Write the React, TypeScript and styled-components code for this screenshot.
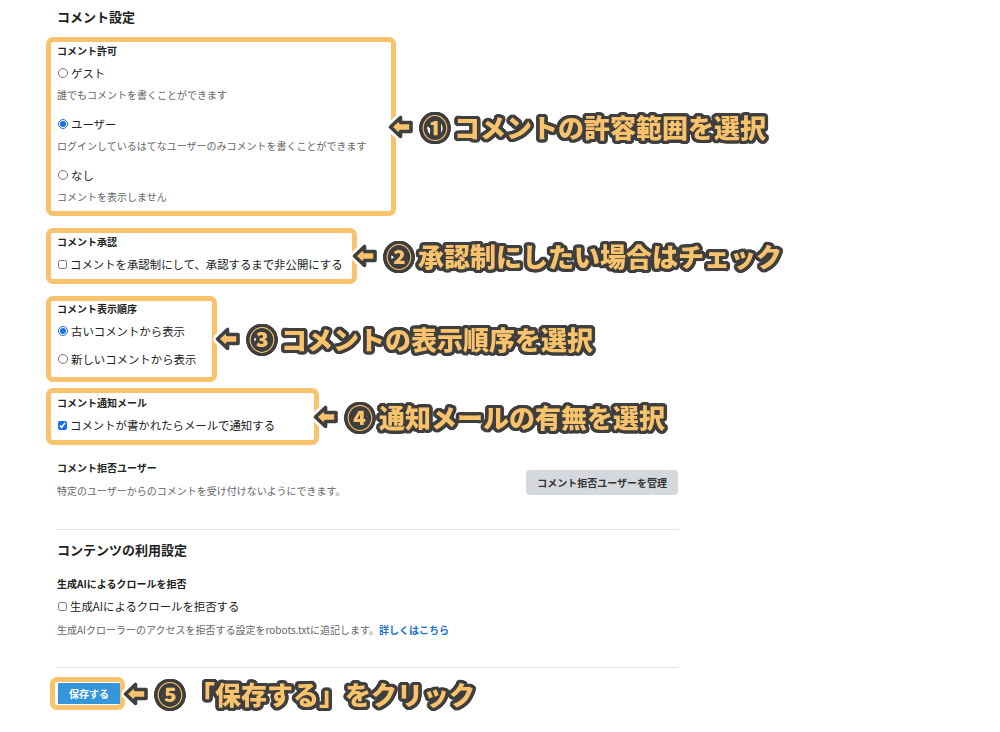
import React from "react";
import styled, { createGlobalStyle } from "styled-components";

const ORANGE = "#f8c36c";
const DARK = "#3f3f3f";

const ring = (r: number, c: string, n = 16) =>
  Array.from({ length: n }, (_, i) => {
    const a = (i * 2 * Math.PI) / n;
    return `${(Math.cos(a) * r).toFixed(2)}px ${(Math.sin(a) * r).toFixed(2)}px 0 ${c}`;
  }).join(", ");

const TEXT_OUTLINE = `${ring(3.4, DARK, 24)}, ${ring(1.7, DARK, 12)}`;

const GlobalStyle = createGlobalStyle`
  html, body { margin: 0; padding: 0; background: #fff; }
  body {
    font-family: "Noto Sans CJK JP", "Noto Sans", sans-serif;
    color: #222;
  }
`;

const Page = styled.div`
  box-sizing: border-box;
  width: 1000px;
  min-height: 732px;
  padding: 8px 0 20px 57px;
`;

const Column = styled.div`
  width: 621px;
  display: flex;
  flex-direction: column;
`;

const SectionTitle = styled.h2<{ $mt?: number }>`
  margin: ${(p) => p.$mt ?? 0}px 0 0;
  font-size: 13px;
  line-height: 18px;
  font-weight: 700;
  color: #222;
`;

const CalloutRow = styled.div<{ $mt: number; $ml?: number }>`
  display: flex;
  align-items: center;
  margin-top: ${(p) => p.$mt}px;
  margin-left: ${(p) => p.$ml ?? -11}px;
  white-space: nowrap;
`;

const Highlight = styled.div<{ $w?: number; $pt?: number; $pb?: number; $pl?: number }>`
  box-sizing: border-box;
  flex-shrink: 0;
  ${(p) => (p.$w ? `width: ${p.$w}px;` : "")}
  border: 5px solid ${ORANGE};
  border-radius: 7px;
  padding: ${(p) => p.$pt ?? 3}px 0 ${(p) => p.$pb ?? 6}px ${(p) => p.$pl ?? 6}px;
  background: #fff;
  display: flex;
  flex-direction: column;
`;

const FieldLabel = styled.div<{ $mt?: number }>`
  margin-top: ${(p) => p.$mt ?? 0}px;
  font-size: 10px;
  line-height: 12px;
  font-weight: 700;
  color: #222;
`;

const ChoiceList = styled.div<{ $gap: number; $mt?: number }>`
  display: flex;
  flex-direction: column;
  gap: ${(p) => p.$gap}px;
  margin-top: ${(p) => p.$mt ?? 7}px;
`;

const Choice = styled.div`
  display: flex;
  flex-direction: column;
`;

const OptionRow = styled.label`
  display: flex;
  align-items: center;
  height: 18px;
  font-size: 11.4px;
  line-height: 18px;
  color: #222;
`;

const Radio = styled.input.attrs({ type: "radio" })`
  width: 10px;
  height: 10px;
  margin: 0 3px 0 1px;
  accent-color: #1a6fe8;
`;

const Check = styled.input.attrs({ type: "checkbox" })`
  width: 9px;
  height: 9px;
  margin: 0 3px 0 1px;
  accent-color: #1a6fe8;
`;

const Help = styled.div<{ $mt?: number }>`
  margin-top: ${(p) => p.$mt ?? 5}px;
  font-size: 10px;
  line-height: 16px;
  color: #666;
`;

const Link = styled.a`
  color: #1c74d0;
  font-weight: 700;
  text-decoration: none;
`;

const Callout = styled.div<{ $overlap: number }>`
  display: flex;
  align-items: center;
  margin-left: -${(p) => p.$overlap}px;
  filter: drop-shadow(2px 0 0 #fff) drop-shadow(-2px 0 0 #fff) drop-shadow(0 2px 0 #fff)
    drop-shadow(0 -2px 0 #fff);
`;

const CalloutText = styled.span`
  font-family: "Noto Sans CJK JP", sans-serif;
  font-weight: 900;
  font-size: 26px;
  line-height: 32px;
  color: ${ORANGE};
  text-shadow: ${TEXT_OUTLINE};
`;

const CalloutNum = styled(CalloutText)`
  margin: 0 6px 0 8px;
`;

const ArrowSvg = styled.svg`
  display: block;
  flex-shrink: 0;
  overflow: visible;
`;

const RejectRow = styled.div`
  margin-top: 17px;
  display: flex;
  align-items: center;
  justify-content: space-between;
`;

const RejectInfo = styled.div`
  display: flex;
  flex-direction: column;
`;

const GreyButton = styled.button`
  height: 25px;
  margin-top: 3px;
  padding: 0 11px;
  border: none;
  border-radius: 4px;
  background: #d5d8dc;
  color: #333;
  font-family: inherit;
  font-size: 10px;
  font-weight: 700;
  line-height: 25px;
`;

const Divider = styled.hr<{ $mt: number }>`
  width: 100%;
  margin: ${(p) => p.$mt}px 0 0;
  border: none;
  border-top: 1px solid #e3e3e3;
  height: 0;
`;

const SaveButton = styled.button`
  width: 62px;
  height: 21px;
  padding: 0;
  border: none;
  border-radius: 1px;
  background: #3497dc;
  color: #fff;
  font-family: inherit;
  font-size: 10px;
  font-weight: 700;
  line-height: 21px;
`;

const Arrow = () => (
  <ArrowSvg width="26" height="26" viewBox="0 0 26 26">
    <path
      d="M2.5 13 L12.5 3.5 L12.5 8.5 L23 8.5 L23 17.5 L12.5 17.5 L12.5 22.5 Z"
      fill={ORANGE}
      stroke={DARK}
      strokeWidth="3.6"
      strokeLinejoin="round"
    />
  </ArrowSvg>
);

const Note = ({ num, text, overlap }: { num: string; text: string; overlap: number }) => (
  <Callout $overlap={overlap}>
    <Arrow />
    <CalloutNum>{num}</CalloutNum>
    <CalloutText>{text}</CalloutText>
  </Callout>
);

export default function App() {
  return (
    <>
      <GlobalStyle />
      <Page>
        <Column>
          <SectionTitle>コメント設定</SectionTitle>

          <CalloutRow $mt={11}>
            <Highlight $w={350}>
              <FieldLabel>コメント許可</FieldLabel>
              <ChoiceList $gap={12}>
                <Choice>
                  <OptionRow>
                    <Radio name="permit" />
                    ゲスト
                  </OptionRow>
                  <Help>誰でもコメントを書くことができます</Help>
                </Choice>
                <Choice>
                  <OptionRow>
                    <Radio name="permit" defaultChecked />
                    ユーザー
                  </OptionRow>
                  <Help>ログインしているはてなユーザーのみコメントを書くことができます</Help>
                </Choice>
                <Choice>
                  <OptionRow>
                    <Radio name="permit" />
                    なし
                  </OptionRow>
                  <Help>コメントを表示しません</Help>
                </Choice>
              </ChoiceList>
            </Highlight>
            <Note num="①" text="コメントの許容範囲を選択" overlap={8} />
          </CalloutRow>

          <CalloutRow $mt={12}>
            <Highlight $w={311}>
              <FieldLabel>コメント承認</FieldLabel>
              <ChoiceList $gap={0}>
                <OptionRow>
                  <Check />
                  コメントを承認制にして、承認するまで非公開にする
                </OptionRow>
              </ChoiceList>
            </Highlight>
            <Note num="②" text="承認制にしたい場合はチェック" overlap={5} />
          </CalloutRow>

          <CalloutRow $mt={12}>
            <Highlight $w={171} $pt={2} $pb={9}>
              <FieldLabel>コメント表示順序</FieldLabel>
              <ChoiceList $gap={10} $mt={7}>
                <OptionRow>
                  <Radio name="order" defaultChecked />
                  古いコメントから表示
                </OptionRow>
                <OptionRow>
                  <Radio name="order" />
                  新しいコメントから表示
                </OptionRow>
              </ChoiceList>
            </Highlight>
            <Note num="③" text="コメントの表示順序を選択" overlap={2} />
          </CalloutRow>

          <CalloutRow $mt={6}>
            <Highlight $w={273} $pt={4} $pb={6}>
              <FieldLabel>コメント通知メール</FieldLabel>
              <ChoiceList $gap={0} $mt={7}>
                <OptionRow>
                  <Check defaultChecked />
                  コメントが書かれたらメールで通知する
                </OptionRow>
              </ChoiceList>
            </Highlight>
            <Note num="④" text="通知メールの有無を選択" overlap={6} />
          </CalloutRow>

          <RejectRow>
            <RejectInfo>
              <FieldLabel>コメント拒否ユーザー</FieldLabel>
              <Help $mt={9}>特定のユーザーからのコメントを受け付けないようにできます。</Help>
            </RejectInfo>
            <GreyButton>コメント拒否ユーザーを管理</GreyButton>
          </RejectRow>

          <Divider $mt={30} />

          <SectionTitle $mt={11}>コンテンツの利用設定</SectionTitle>
          <FieldLabel $mt={19}>生成AIによるクロールを拒否</FieldLabel>
          <ChoiceList $gap={0} $mt={7}>
            <OptionRow>
              <Check />
              生成AIによるクロールを拒否する
            </OptionRow>
          </ChoiceList>
          <Help $mt={7}>
            生成AIクローラーのアクセスを拒否する設定をrobots.txtに追記します。
            <Link href="#">詳しくはこちら</Link>
          </Help>

          <Divider $mt={29} />

          <CalloutRow $mt={9} $ml={-7}>
            <Highlight $pt={1} $pb={1} $pl={3}>
              <SaveButton>保存する</SaveButton>
            </Highlight>
            <Note num="⑤" text="「保存する」をクリック" overlap={2} />
          </CalloutRow>
        </Column>
      </Page>
    </>
  );
}
